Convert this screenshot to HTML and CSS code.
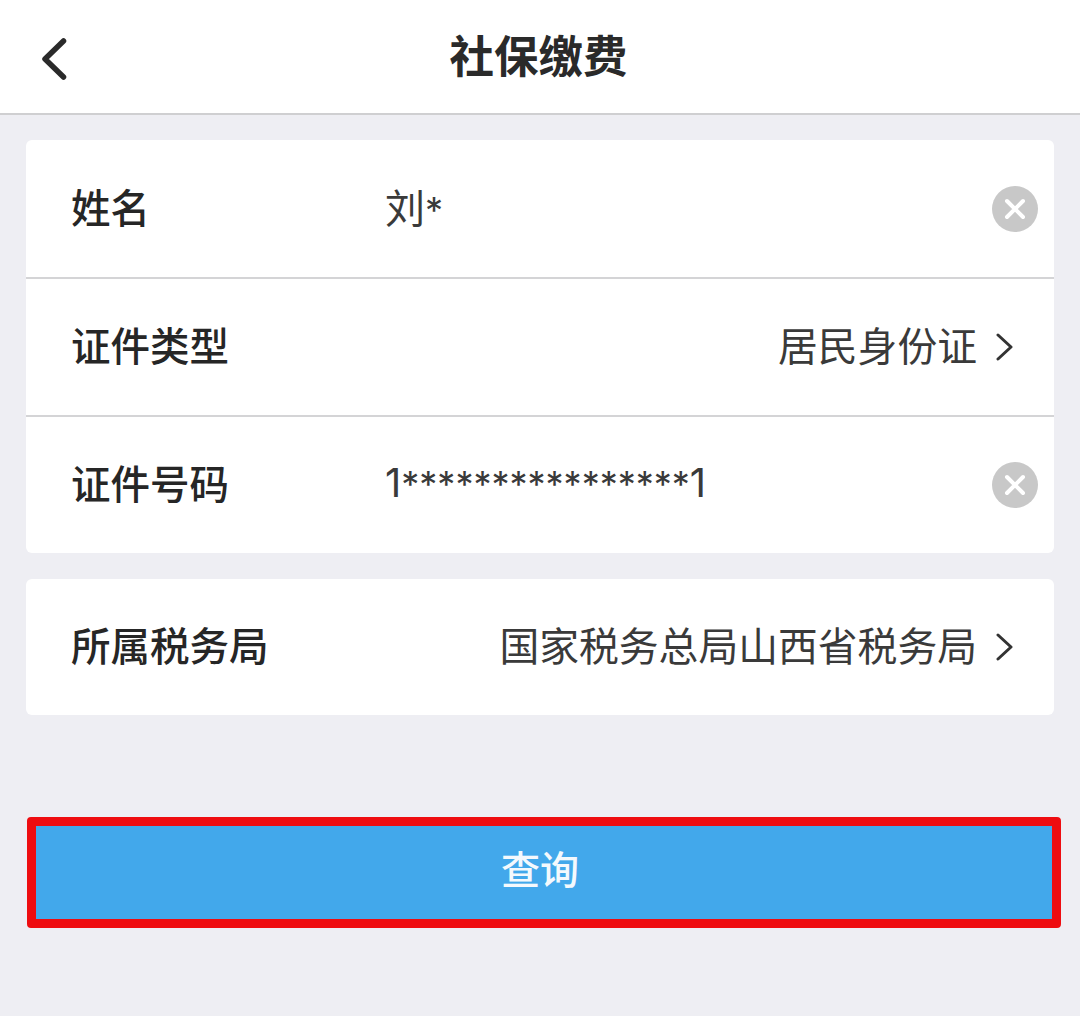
FILE: index.html
```html
<!DOCTYPE html>
<html lang="zh-CN">
<head>
<meta charset="utf-8">
<title>社保缴费</title>
<link rel="stylesheet" href="styles.css">
</head>
<body>
<header class="topbar">
  <svg class="back" width="26" height="42" viewBox="0 0 26 42"><path d="M22.500 3 L4 21 L22.500 39" fill="none" stroke="#2a2a2a" stroke-width="5.500" stroke-linecap="round" stroke-linejoin="round"/></svg>
  <h1 class="title">社保缴费</h1>
</header>
<main class="content">
  <section class="card">
    <div class="row">
      <span class="label">姓名</span>
      <span class="value">刘<span class="stars">*</span></span>
      <svg class="clear" width="46" height="46" viewBox="0 0 46 46"><circle cx="23" cy="23" r="23" fill="#c8c8c8"/><path d="M15 15 L31 31 M31 15 L15 31" stroke="#fff" stroke-width="4" stroke-linecap="round"/></svg>
    </div>
    <div class="row">
      <span class="label">证件类型</span>
      <span class="pick">居民身份证</span>
      <svg class="chev" width="18" height="28" viewBox="0 0 18 28"><path d="M2 2 L15 14 L2 26" fill="none" stroke="#333" stroke-width="3" stroke-linecap="round" stroke-linejoin="round"/></svg>
    </div>
    <div class="row">
      <span class="label">证件号码</span>
      <span class="value">1<span class="stars">****************</span>1</span>
      <svg class="clear" width="46" height="46" viewBox="0 0 46 46"><circle cx="23" cy="23" r="23" fill="#c8c8c8"/><path d="M15 15 L31 31 M31 15 L15 31" stroke="#fff" stroke-width="4" stroke-linecap="round"/></svg>
    </div>
  </section>
  <section class="card">
    <div class="row">
      <span class="label">所属税务局</span>
      <span class="pick">国家税务总局山西省税务局</span>
      <svg class="chev" width="18" height="28" viewBox="0 0 18 28"><path d="M2 2 L15 14 L2 26" fill="none" stroke="#333" stroke-width="3" stroke-linecap="round" stroke-linejoin="round"/></svg>
    </div>
  </section>
  <button class="query"><span class="query-text">查询</span></button>
</main>
</body>
</html>
```
FILE: styles.css
```css
* { box-sizing: border-box; }
html, body { margin: 0; height: 100%; }
body {
  background: #eeeef3;
  font-family: "Liberation Sans", "Noto Sans CJK SC", sans-serif;
  color: #2a2a2a;
  overflow: hidden;
}
.topbar {
  height: 115px;
  background: #fff;
  border-bottom: 2px solid #cfcfd1;
  display: flex;
  align-items: center;
  justify-content: center;
  position: relative;
}
.back { position: absolute; left: 41px; top: 38px; }
.title {
  margin: 0 3px 0 0;
  padding-top: 3px;
  font-size: 44.500px;
  font-weight: 700;
  line-height: 1;
  color: #2a2a2a;
}
.content {
  padding: 25px 26px 0;
  display: flex;
  flex-direction: column;
  align-items: flex-start;
}
.card {
  width: 1028px;
  background: #fff;
  border-radius: 6px;
  overflow: hidden;
  margin-bottom: 26px;
}
.row {
  height: 138px;
  display: flex;
  align-items: center;
  padding: 0 16px 0 45px;
  border-bottom: 2px solid #d4d4d6;
  font-size: 39.500px;
}
.row:first-child { height: 139px; }
.row:last-child { border-bottom: 0; height: 136px; }
.label { font-weight: 500; width: 314px; flex: none; color: #262626; padding-bottom: 7px; }
.value {
  flex: 1;
  color: #3a3a3a;
  font-family: Inter, "Noto Sans CJK SC", sans-serif;
  font-size: 40px;
  padding-bottom: 5px;
}
.stars { font-size: 36px; }
.pick { flex: 1; text-align: right; color: #3a3a3a; font-size: 39.800px; white-space: nowrap; padding-bottom: 7px; }
.chev { flex: none; margin-left: 19px; margin-right: 24px; }
.clear { flex: none; }
.query {
  display: block;
  width: 1034px;
  height: 111px;
  margin: 76px 0 0 1px;
  padding: 0 8px 11px 0;
  background: #42a8eb;
  border: 9px solid #ee0c10;
  border-radius: 4px;
  color: #f4f9fd;
  font: 500 39px "Liberation Sans", "Noto Sans CJK SC", sans-serif;
}
.query-text { display: inline-block; }
```
